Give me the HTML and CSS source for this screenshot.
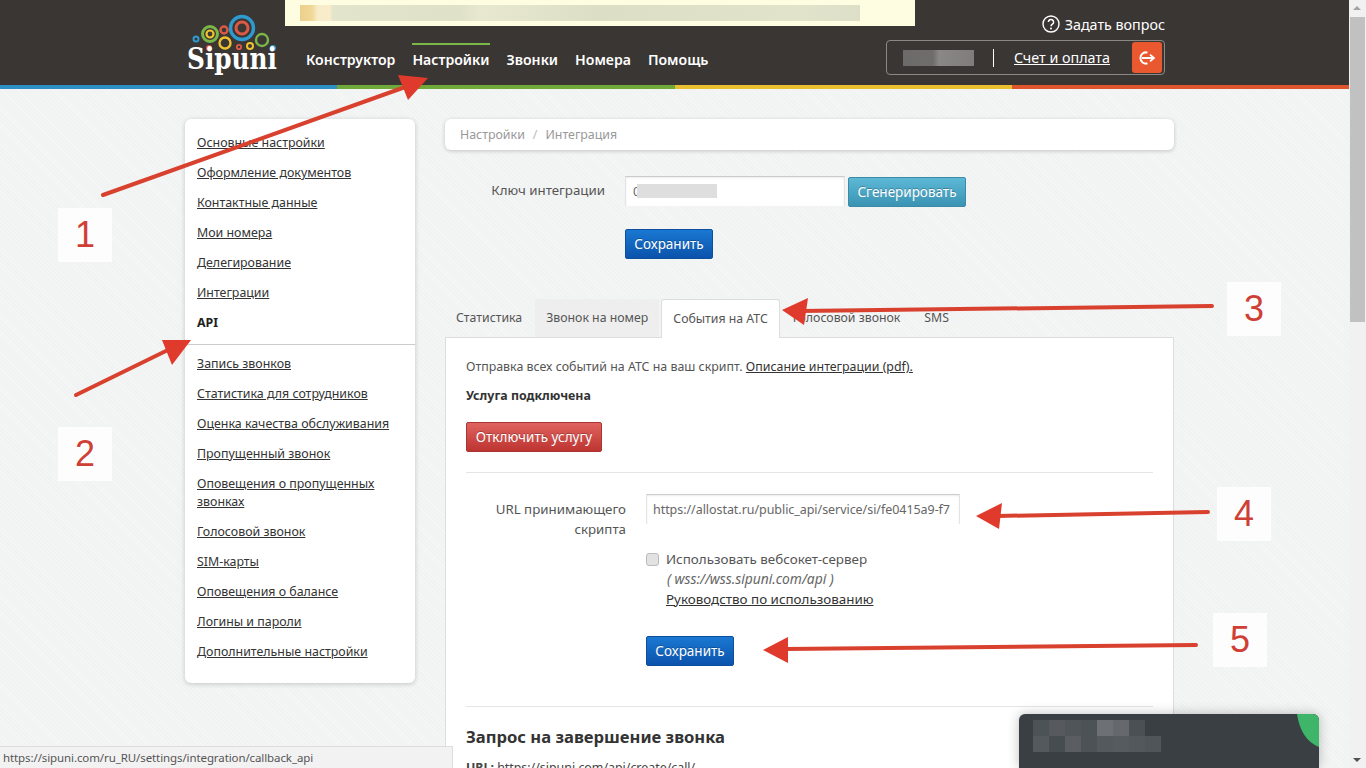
FILE: index.html
```html
<!DOCTYPE html>
<html lang="ru">
<head>
  <meta charset="UTF-8">
  <meta name="viewport" content="width=device-width, initial-scale=1.0">
  <title>Sipuni - Интеграция</title>
  <link rel="stylesheet" href="styles.css">
</head>
<body>

  <header class="site-header">
    <div class="notice"><span class="notice-blur"></span></div>
    <div class="header-inner">
      <a class="logo" href="#">
        <svg width="92" height="66" viewBox="183 10 92 66">
          <g fill="none">
            <circle cx="240" cy="28" r="11.5" stroke="#2d9ad0" stroke-width="3.4"/>
            <circle cx="240" cy="28" r="6" stroke="#dc5a45" stroke-width="3"/>
            <circle cx="208" cy="34" r="7.5" stroke="#7ab648" stroke-width="3"/>
            <circle cx="208" cy="34" r="3.5" stroke="#eec32e" stroke-width="2.2"/>
            <circle cx="222" cy="30" r="3.5" stroke="#dc5a45" stroke-width="2.4"/>
            <circle cx="194" cy="39" r="2.5" stroke="#2d9ad0" stroke-width="2"/>
            <circle cx="223" cy="43" r="5.5" stroke="#eec32e" stroke-width="2.4"/>
            <circle cx="237" cy="47" r="2.2" stroke="#dc5a45" stroke-width="1.8"/>
            <circle cx="248" cy="46" r="3" stroke="#eec32e" stroke-width="2"/>
            <circle cx="260" cy="40" r="6" stroke="#7ab648" stroke-width="2.4"/>
          </g>
          <circle cx="207" cy="48" r="3" fill="#dc5a45"/>
          <circle cx="271" cy="48" r="3" fill="#2d9ad0"/>
          <text class="logo-text" x="185" y="69" textLength="90" lengthAdjust="spacingAndGlyphs">Sipuni</text>
        </svg>
      </a>
      <nav class="main-nav">
        <a href="#">Конструктор</a>
        <a href="#" class="active">Настройки</a>
        <a href="#">Звонки</a>
        <a href="#">Номера</a>
        <a href="#">Помощь</a>
      </nav>
      <div class="header-right">
        <a class="ask" href="#">
          <svg width="18" height="18" viewBox="0 0 18 18">
            <circle cx="9" cy="9" r="8" fill="none" stroke="#fff" stroke-width="1.4"/>
            <path d="M6.4 7a2.6 2.6 0 1 1 4 2.2c-.9.6-1.4 1-1.4 2.1" fill="none" stroke="#fff" stroke-width="1.5"/>
            <circle cx="9" cy="13.6" r="1" fill="#fff"/>
          </svg>
          Задать вопрос
        </a>
        <div class="account">
          <span class="account-blur"></span>
          <span class="account-sep"></span>
          <a href="#">Счет и оплата</a>
          <button class="logout" type="button">
            <svg width="20" height="16" viewBox="0 0 20 16">
              <path d="M10.5 2.6A5.6 5.6 0 1 0 10.5 13.4" fill="none" stroke="#fff" stroke-width="2"/>
              <path d="M5 8h12M13 4.6 17 8l-4 3.4" fill="none" stroke="#fff" stroke-width="1.8"/>
            </svg>
          </button>
        </div>
      </div>
    </div>
  </header>
  <div class="stripes"><span class="s-blue"></span><span class="s-green"></span><span class="s-yellow"></span><span class="s-red"></span></div>

  <div class="page">
    <aside class="side-menu">
      <ul>
        <li><a href="#">Основные настройки</a></li>
        <li><a href="#">Оформление документов</a></li>
        <li><a href="#">Контактные данные</a></li>
        <li><a href="#">Мои номера</a></li>
        <li><a href="#">Делегирование</a></li>
        <li><a href="#">Интеграции</a></li>
        <li class="current">API</li>
      </ul>
      <hr>
      <ul>
        <li><a href="#">Запись звонков</a></li>
        <li><a href="#">Статистика для сотрудников</a></li>
        <li><a href="#">Оценка качества обслуживания</a></li>
        <li><a href="#">Пропущенный звонок</a></li>
        <li><a href="#">Оповещения о пропущенных звонках</a></li>
        <li><a href="#">Голосовой звонок</a></li>
        <li><a href="#">SIM-карты</a></li>
        <li><a href="#">Оповещения о балансе</a></li>
        <li><a href="#">Логины и пароли</a></li>
        <li><a href="#">Дополнительные настройки</a></li>
      </ul>
    </aside>

    <main class="content">
      <div class="breadcrumb">Настройки<span class="crumb-sep">/</span>Интеграция</div>

      <div class="key-form">
        <label class="field-label">Ключ интеграции</label>
        <div class="key-row">
          <div class="key-input">
            <input type="text" value="0">
            <span class="key-blur"></span>
          </div>
          <button class="btn btn-teal" type="button">Сгенерировать</button>
        </div>
        <div></div>
        <div><button class="btn btn-blue" type="button">Сохранить</button></div>
      </div>

      <div class="tabs">
        <a href="#">Статистика</a>
        <a href="#" class="hover">Звонок на номер</a>
        <a href="#" class="active">События на АТС</a>
        <a href="#">Голосовой звонок</a>
        <a href="#">SMS</a>
      </div>

      <section class="panel">
        <p class="intro">Отправка всех событий на АТС на ваш скрипт. <a href="#">Описание интеграции (pdf).</a></p>
        <p class="status">Услуга подключена</p>
        <button class="btn btn-red" type="button">Отключить услугу</button>
        <hr class="line-first">

        <div class="url-form">
          <label class="field-label url-label">URL принимающего скрипта</label>
          <input class="url-input" type="text" value="https://allostat.ru/public_api/service/si/fe0415a9-f7">
          <div></div>
          <div class="ws-block">
            <label class="ws-check"><input type="checkbox"> Использовать вебсокет-сервер</label>
            <div class="ws-url">( wss://wss.sipuni.com/api )</div>
            <a href="#">Руководство по использованию</a>
          </div>
          <div></div>
          <div><button class="btn btn-blue" type="button">Сохранить</button></div>
        </div>
        <hr class="line-second">

        <h3>Запрос на завершение звонка</h3>
        <p class="url-line"><strong>URL:</strong> https://sipuni.com/api/create/call/</p>
      </section>
    </main>
  </div>

  <!-- red arrows and numbers drawn over the page -->
  <svg class="arrows" width="1366" height="768" viewBox="0 0 1366 768">
    <g fill="none" stroke="#d9412f" stroke-width="4" stroke-linecap="round">
      <path d="M103 195 408 86"/>
      <path d="M76 395 174 347"/>
      <path d="M1212 306 800 311"/>
      <path d="M1208 512 998 516"/>
      <path d="M1196 645 785 649"/>
    </g>
    <g fill="#e03a2c">
      <path d="M428 78 398 75 408 100Z"/>
      <path d="M191 340 162 340 172 365Z"/>
      <path d="M782 310 808 298 804 325Z"/>
      <path d="M976 516 1002 503 999 529Z"/>
      <path d="M763 650 788 637 788 663Z"/>
    </g>
  </svg>
  <div class="num num-1">1</div>
  <div class="num num-2">2</div>
  <div class="num num-3">3</div>
  <div class="num num-4">4</div>
  <div class="num num-5">5</div>

  <div class="status-bar">https://sipuni.com/ru_RU/settings/integration/callback_api</div>

  <div class="chat">
    <div class="chat-row chat-row-a"><span></span><span></span><span></span><span></span><span></span><span></span><span></span></div>
    <div class="chat-row chat-row-b"><span></span><span></span><span></span><span></span><span></span><span></span><span></span><span></span></div>
    <svg class="chat-leaf" width="22" height="34" viewBox="0 0 22 34">
      <path d="M0 0H16Q22 0 22 6V33Q4 26 0 0Z" fill="#3fb56a"/>
    </svg>
  </div>

  <div class="scrollbar">
    <span class="sb-up"></span>
    <span class="sb-thumb"></span>
    <span class="sb-down"></span>
  </div>

</body>
</html>
```

FILE: styles.css
```css
* {
  box-sizing: border-box;
}
html, body {
  height: 768px;
  overflow: hidden;
}
body {
  margin: 0;
  width: 1349px;
  font-family: "Noto Sans", "Open Sans", sans-serif;
  font-size: 12.4px;
  color: #444;
  background-color: #f3f4f4;
  background-image: repeating-linear-gradient(45deg, #f5f6f6 0, #f5f6f6 1px, #f1f2f2 1px, #f1f2f2 3px);
}
a {
  color: inherit;
}
hr {
  border: 0;
  margin: 0;
  height: 1px;
}
p {
  margin: 0;
}

/* header */
.site-header {
  position: relative;
  height: 85px;
  background: #3a3634;
}
.notice {
  position: absolute;
  left: 285px;
  top: 0;
  width: 630px;
  height: 26px;
  background: #fefde2;
}
.notice-blur {
  position: absolute;
  left: 15px;
  top: 5px;
  width: 560px;
  height: 16px;
  background: linear-gradient(90deg, #eccf8c 0, #f1d898 12px, #f8eccb 18px, #f8eccb 30px, #e2e4cc 33px, #dfe1c9 160px, #e7e8cf 180px, #dcdec6 300px, #e2e3cb 500px, #dddfc8 560px);
}
.header-inner {
  display: flex;
  width: 980px;
  height: 85px;
  margin-left: 185px;
}
.logo {
  display: block;
  width: 92px;
  height: 66px;
  margin-top: 10px;
}
.logo svg {
  display: block;
  overflow: visible;
}
.logo-text {
  font-family: "DejaVu Serif", "Liberation Serif", serif;
  font-weight: bold;
  font-size: 29px;
  fill: #fff;
}
.main-nav {
  display: flex;
  gap: 17px;
  margin-left: 29px;
  padding-top: 43px;
}
.main-nav a {
  color: #fff;
  font-size: 14.1px;
  font-weight: 600;
  text-decoration: none;
  line-height: 29px;
  border-top: 2px solid transparent;
  height: 33px;
}
.main-nav a.active {
  border-top-color: #7ab648;
}
.header-right {
  display: flex;
  flex-direction: column;
  align-items: flex-end;
  margin-left: auto;
  padding-top: 15px;
}
.ask {
  display: flex;
  align-items: center;
  gap: 5px;
  height: 18px;
  color: #fff;
  font-size: 14.3px;
  text-decoration: none;
}
.account {
  display: flex;
  align-items: center;
  width: 279px;
  height: 35px;
  margin-top: 7px;
  padding: 0 2px 0 16px;
  border: 1px solid #8b8886;
  border-radius: 4px;
  color: #fff;
  font-size: 14.3px;
}
.account-blur {
  width: 71px;
  height: 16px;
  background: linear-gradient(90deg, #6d6b6a 0, #6f6d6c 30px, #8a8887 36px, #7f7d7c 71px);
}
.account-sep {
  width: 1px;
  height: 18px;
  margin: 0 20px 0 19px;
  background: #fff;
}
.logout {
  width: 30px;
  height: 31px;
  margin-left: auto;
  padding: 0;
  border: 0;
  border-radius: 3px;
  background: #e9582e;
  display: flex;
  align-items: center;
  justify-content: center;
}
.stripes {
  display: flex;
  height: 4px;
}
.stripes span {
  flex: 1;
}
.s-blue { background: #2d8fc4; }
.s-green { background: #6fa93a; }
.s-yellow { background: #e8bf2e; }
.s-red { background: #e0562c; }

/* page */
.page {
  display: flex;
  align-items: flex-start;
  gap: 30px;
  margin-left: 185px;
  padding-top: 30px;
}
.side-menu {
  width: 230px;
  height: 564px;
  padding: 9px 0 16px;
  background: #fff;
  border-radius: 6px;
  box-shadow: 0 1px 5px rgba(0,0,0,0.2);
}
.side-menu ul {
  list-style: none;
  margin: 0;
  padding: 0;
}
.side-menu li {
  padding: 6px 12px;
  line-height: 18px;
  color: #333;
}
.side-menu li.current {
  font-weight: bold;
  color: #222;
}
.side-menu hr {
  background: #ccc;
  margin: 6px 0 4px;
}

.content {
  width: 729px;
}
.breadcrumb {
  height: 31px;
  padding: 0 15px;
  line-height: 31px;
  background: #fff;
  border-radius: 6px;
  box-shadow: 0 1px 4px rgba(0,0,0,0.2);
  color: #999;
}
.crumb-sep {
  margin: 0 8px;
  color: #bbb;
}
.key-form {
  display: grid;
  grid-template-columns: 160px 1fr;
  column-gap: 20px;
  row-gap: 22px;
  margin-top: 26px;
}
.field-label {
  text-align: right;
  font-size: 13.3px;
  color: #555;
  line-height: 29px;
}
.key-row {
  display: flex;
  align-items: flex-end;
  gap: 3px;
  height: 31px;
}
.key-input {
  position: relative;
  height: 31px;
}
.key-input input,
.url-input {
  display: block;
  font-family: "Noto Sans", "Open Sans", sans-serif;
  font-size: 12.5px;
  color: #666;
  background: #fff;
  border: 0;
  border-top: 1px solid #ccc;
  border-left: 1px solid #e4e4e4;
  border-right: 1px solid #e4e4e4;
  box-shadow: inset 0 1px 2px rgba(0,0,0,0.08);
  outline: 0;
}
.key-input input {
  width: 220px;
  height: 30px;
  padding: 0 7px;
}
.key-blur {
  position: absolute;
  left: 12px;
  top: 8px;
  width: 80px;
  height: 14px;
  background: #dedede;
}
.btn {
  display: block;
  height: 30px;
  padding: 0;
  font-family: "Noto Sans", "Open Sans", sans-serif;
  font-size: 13.5px;
  color: #fff;
  border-radius: 2px;
  text-shadow: 0 -1px 0 rgba(0,0,0,0.25);
}
.btn-teal {
  width: 118px;
  background: linear-gradient(#5db8d6, #3a93b3);
  border: 1px solid #3a8aa8;
}
.btn-blue {
  width: 88px;
  background: linear-gradient(#1a78d2, #0b53ac);
  border: 1px solid #0d4f9c;
}
.btn-red {
  width: 136px;
  background: linear-gradient(#e0635f, #bd3431);
  border: 1px solid #a93431;
}

/* tabs */
.tabs {
  display: flex;
  gap: 2px;
  height: 39px;
  margin-top: 40px;
  font-size: 12.3px;
}
.tabs a {
  display: block;
  height: 38px;
  padding: 0 11px;
  line-height: 37px;
  color: #555;
  text-decoration: none;
}
.tabs a.hover {
  background: #eee;
}
.tabs a.active {
  position: relative;
  z-index: 1;
  height: 39px;
  background: #fff;
  border: 1px solid #ddd;
  border-bottom: 0;
  border-radius: 3px 3px 0 0;
}
.panel {
  margin-top: -1px;
  height: 431px;
  padding: 20px 20px 0;
  background: #fff;
  border: 1px solid #ddd;
  border-bottom: 0;
  line-height: 18px;
}
.intro {
  color: #555;
}
.intro a {
  color: #333;
}
.status {
  margin: 11px 0 17px;
  font-weight: bold;
  color: #333;
}
.line-first {
  background: #e5e5e5;
  margin: 20px 0 21px;
}
.url-form {
  display: grid;
  grid-template-columns: 160px 1fr;
  column-gap: 20px;
}
.url-label {
  padding-top: 5px;
  line-height: 20px;
}
.url-input {
  width: 314px;
  height: 30px;
  padding: 0 6px;
  letter-spacing: -0.05px;
}
.ws-block {
  margin-top: 10px;
  line-height: 20px;
  font-size: 13.4px;
  color: #555;
}
.ws-check {
  display: flex;
  align-items: center;
  gap: 7px;
}
.ws-check input {
  appearance: none;
  width: 13px;
  height: 13px;
  margin: 0;
  background: #e2e2e2;
  border: 1px solid #bbb;
  border-radius: 3px;
}
.ws-url {
  padding-left: 1px;
  font-style: italic;
  font-size: 13.8px;
  color: #666;
  margin-left: 20px;
}
.ws-block a {
  display: block;
  margin-left: 20px;
  color: #333;
}
.url-form .btn {
  margin-top: 27px;
}
.line-second {
  background: #e5e5e5;
  margin: 40px 0 0;
}
.panel h3 {
  margin: 18px 0 10px;
  font-size: 16.6px;
  line-height: 24px;
  font-weight: bold;
  color: #333;
}
.url-line {
  font-size: 12.4px;
}

/* annotations */
.arrows {
  position: absolute;
  left: 0;
  top: 0;
  pointer-events: none;
}
.num {
  position: absolute;
  width: 54px;
  height: 54px;
  background: #fdfdfd;
  color: #cf3f35;
  font-family: "Liberation Sans", Arial, sans-serif;
  font-size: 36px;
  line-height: 54px;
  text-align: center;
}
.num-1 { left: 58px; top: 208px; }
.num-2 { left: 58px; top: 427px; }
.num-3 { left: 1227px; top: 282px; }
.num-4 { left: 1217px; top: 487px; }
.num-5 { left: 1213px; top: 613px; }

/* browser status tooltip */
.status-bar {
  position: absolute;
  left: 0;
  top: 746px;
  width: 453px;
  height: 22px;
  padding-left: 3px;
  line-height: 22px;
  font-size: 11.5px;
  letter-spacing: -0.1px;
  color: #555;
  background: #f2f2f2;
  border-top: 1px solid #ddd;
  border-right: 1px solid #ddd;
  white-space: nowrap;
}

/* chat widget */
.chat {
  position: absolute;
  left: 1019px;
  top: 714px;
  width: 300px;
  height: 54px;
  background: #3a3f44;
  border-radius: 6px 6px 0 0;
  box-shadow: 0 0 12px rgba(0,0,0,0.25);
  overflow: hidden;
}
.chat-row {
  display: flex;
  position: absolute;
  left: 14px;
  filter: blur(0.6px);
}
.chat-row span {
  width: 16px;
  height: 16px;
  background: #4d5257;
}
.chat-row-a { top: 6px; }
.chat-row-b { top: 22px; }
.chat-row-a span:nth-child(2) { background: #565a5f; }
.chat-row-a span:nth-child(3) { background: #50555a; }
.chat-row-a span:nth-child(5) { background: #6d7074; }
.chat-row-a span:nth-child(6) { background: #65696d; }
.chat-row-a span:nth-child(7) { background: #4b5055; }
.chat-row-b span:nth-child(1) { background: #54595e; }
.chat-row-b span:nth-child(2) { background: #474c51; }
.chat-row-b span:nth-child(3) { background: #5a5e63; }
.chat-row-b span:nth-child(5) { background: #54595e; }
.chat-row-b span:nth-child(6) { background: #565b60; }
.chat-row-b span:nth-child(7) { background: #53585d; }
.chat-row-b span:nth-child(8) { background: #50555a; }
.chat-leaf {
  position: absolute;
  right: 0;
  top: 0;
}

/* scrollbar */
.scrollbar {
  position: absolute;
  left: 1349px;
  top: 0;
  width: 17px;
  height: 768px;
  background: #f1f1f1;
}
.sb-thumb {
  position: absolute;
  left: 1px;
  top: 17px;
  width: 15px;
  height: 305px;
  background: #c1c1c1;
}
.sb-up, .sb-down {
  position: absolute;
  left: 4px;
  width: 0;
  height: 0;
  border-left: 4px solid transparent;
  border-right: 4px solid transparent;
}
.sb-up {
  top: 6px;
  border-bottom: 4px solid #a3a3a3;
}
.sb-down {
  bottom: 6px;
  border-top: 4px solid #505050;
}
```
